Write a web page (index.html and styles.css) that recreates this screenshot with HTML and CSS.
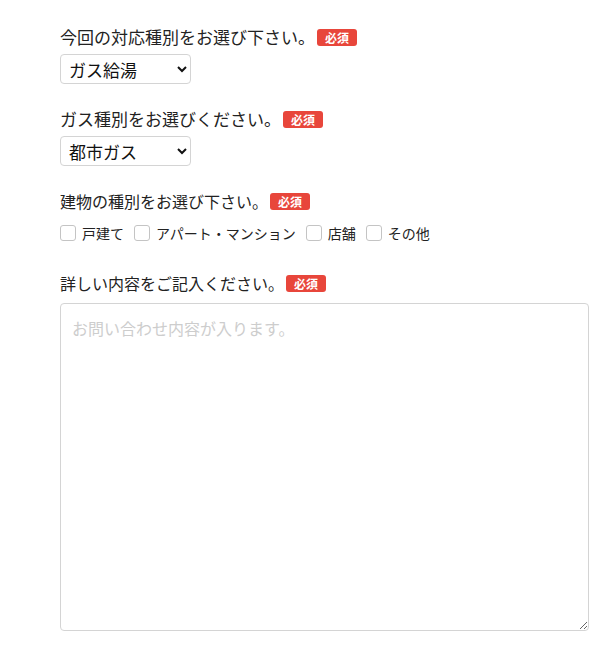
FILE: index.html
```html
<!DOCTYPE html>
<html lang="ja">
<head>
<meta charset="utf-8">
<link rel="stylesheet" href="styles.css">
</head>
<body>
<form class="form">
  <div class="field">
    <p class="label label-lg">今回の対応種別をお選び下さい。<span class="req">必須</span></p>
    <select class="select"><option>ガス給湯</option></select>
  </div>
  <div class="field">
    <p class="label label-lg">ガス種別をお選びください。<span class="req">必須</span></p>
    <select class="select"><option>都市ガス</option></select>
  </div>
  <div class="field">
    <p class="label">建物の種別をお選び下さい。<span class="req">必須</span></p>
    <div class="checks">
      <label class="check"><span class="box"></span>戸建て</label>
      <label class="check"><span class="box"></span>アパート・マンション</label>
      <label class="check"><span class="box"></span>店舗</label>
      <label class="check"><span class="box"></span>その他</label>
    </div>
  </div>
  <div class="field field-last">
    <p class="label">詳しい内容をご記入ください。<span class="req">必須</span></p>
    <textarea class="textarea" placeholder="お問い合わせ内容が入ります。"></textarea>
  </div>
</form>
</body>
</html>
```
FILE: styles.css
```css
html, body {
  margin: 0;
  background: #fff;
}
body {
  font-family: "Noto Sans CJK JP", "Noto Sans", sans-serif;
  color: #222;
}
.form {
  padding: 24px 21px 0 60px;
  display: flex;
  flex-direction: column;
  gap: 22px;
}
.field {
  display: flex;
  flex-direction: column;
  gap: 4px;
}
.label {
  margin: 0;
  font-size: 16px;
  line-height: 26px;
  display: flex;
  align-items: center;
}
.label-lg {
  font-size: 17px;
}
.req {
  display: inline-block;
  margin-left: 2px;
  background: #e8463b;
  color: #fff;
  font-size: 12px;
  font-weight: 700;
  line-height: 17px;
  padding: 0 8px;
  border-radius: 3px;
}
.select {
  width: 131px;
  height: 30px;
  font-family: inherit;
  font-size: 17px;
  color: #111;
  border: 1px solid #d4d4d4;
  border-radius: 4px;
  background: #fff;
  padding: 0 4px;
}
.checks {
  display: flex;
  gap: 10px;
  margin-top: 6px;
  font-size: 14px;
}
.check {
  display: flex;
  align-items: center;
  gap: 6px;
  line-height: 18px;
}
.box {
  width: 14px;
  height: 14px;
  border: 1px solid #c4c4c4;
  border-radius: 3px;
  background: #fff;
}
.field-last {
  margin-top: 6px;
  gap: 7px;
}
.textarea {
  width: 529px;
  height: 328px;
  box-sizing: border-box;
  border: 1px solid #d4d4d4;
  border-radius: 4px;
  padding: 12px 11px;
  font-family: inherit;
  font-size: 16px;
  resize: vertical;
}
.textarea::placeholder {
  color: #cdcdcd;
}
```
